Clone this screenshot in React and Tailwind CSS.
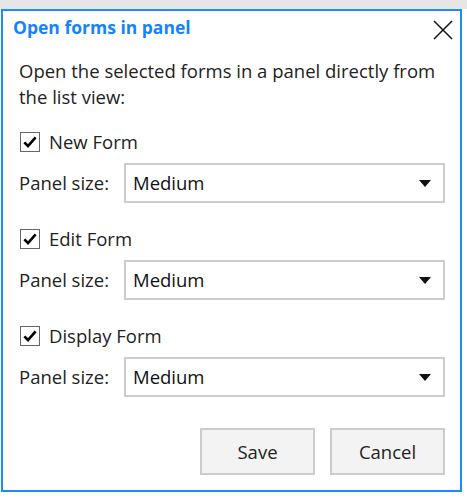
import React from "react";

const FONT = { fontFamily: '"Open Sans", "Noto Sans", sans-serif' };

const Check = () => (
  <span className="w-[20px] h-[20px] border border-[#666] bg-white flex items-center justify-center shrink-0">
    <svg width="16" height="16" viewBox="0 0 16 16">
      <path d="M2.3 8.3 L6 12 L13.6 3.3" stroke="#000" strokeWidth="2.6" fill="none" />
    </svg>
  </span>
);

const FormOption = ({ label }) => (
  <div className="flex flex-col">
    <label className="flex items-center gap-[9px] h-[20px] ml-[1px]">
      <Check />
      <span className="text-[18.5px] text-[#222]">{label}</span>
    </label>
    <div className="flex items-center mt-[11px]">
      <span className="w-[105px] text-[18.5px] text-[#222]">Panel size:</span>
      <div className="flex-1 h-[40px] border-2 border-[#cccccc] flex items-center justify-between pl-[7px] pr-[12px]">
        <span className="text-[18.5px] text-[#111]">Medium</span>
        <svg width="12" height="7" viewBox="0 0 12 7">
          <path d="M0 0 H12 L6 7 Z" fill="#111" />
        </svg>
      </div>
    </div>
  </div>
);

const App = () => {
  return (
    <div className="w-[467px] h-[500px] bg-white relative overflow-hidden" style={FONT}>
      <div className="h-[9px] bg-[#e6e6e6]" />
      <div className="ml-[1px] w-[461px] h-[483px] border-2 border-[#1a8cff] bg-white flex flex-col">
        {/* header */}
        <div className="flex items-start justify-between pl-[10px] pr-[7px] pt-[4px]">
          <h2 className="text-[17.5px] font-bold text-[#1683fb] leading-[24px]">Open forms in panel</h2>
          <svg width="20" height="20" viewBox="0 0 20 20" className="mt-[5px]">
            <path d="M1 1 L19 19 M19 1 L1 19" stroke="#111" strokeWidth="1.5" />
          </svg>
        </div>

        {/* body */}
        <div className="pl-[16px] pr-[15px] pt-[18px] flex flex-col">
          <p className="text-[18.5px] leading-[26px] text-[#222]">
            Open the selected forms in a panel directly from the list view:
          </p>
          <div className="flex flex-col gap-[26px] mt-[22px]">
            <FormOption label="New Form" />
            <FormOption label="Edit Form" />
            <FormOption label="Display Form" />
          </div>
        </div>

        {/* footer */}
        <div className="flex justify-end gap-[15px] pr-[15px] mt-auto mb-[15px]">
          <button className="w-[115px] h-[47px] bg-[#f3f3f3] border-2 border-[#cccccc] text-[18.5px] text-[#222]">Save</button>
          <button className="w-[115px] h-[47px] bg-[#f3f3f3] border-2 border-[#cccccc] text-[18.5px] text-[#222]">Cancel</button>
        </div>
      </div>
    </div>
  );
};

export default App;
